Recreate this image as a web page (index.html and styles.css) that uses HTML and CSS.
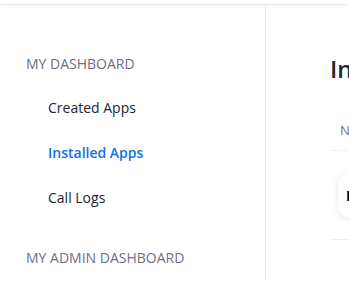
FILE: index.html
```html
<!DOCTYPE html>
<html>
<head>
<meta charset="utf-8">
<link rel="stylesheet" href="styles.css">
</head>
<body>
<div class="header"></div>
<div class="layout">
  <aside class="sidebar">
    <div class="section-title">MY DASHBOARD</div>
    <ul class="nav">
      <li class="nav-item">Created Apps</li>
      <li class="nav-item active">Installed Apps</li>
      <li class="nav-item">Call Logs</li>
    </ul>
    <div class="section-title admin">MY ADMIN DASHBOARD</div>
  </aside>
  <main class="main">
    <h1 class="title">Installed Apps</h1>
    <div class="table">
      <div class="thead">Name</div>
      <div class="row">
        <div class="app-card">N</div>
      </div>
    </div>
  </main>
</div>
</body>
</html>
```
FILE: styles.css
```css
html, body {
  margin: 0;
  padding: 0;
  background: #fff;
  overflow: hidden;
}
body {
  font-family: "Open Sans", "Liberation Sans", sans-serif;
  color: #232333;
  width: 349px;
  height: 281px;
}
.header {
  height: 4px;
  border-bottom: 1px solid #e9e9ec;
  box-shadow: 0 2px 4px rgba(0, 0, 0, 0.03);
  position: relative;
  z-index: 1;
}
.layout {
  display: flex;
  height: 276px;
}
.sidebar {
  width: 265px;
  flex: none;
  border-right: 1px solid #ebebee;
  padding-top: 49px;
  box-sizing: content-box;
}
.section-title {
  font-size: 14px;
  line-height: 20px;
  color: #6e6f82;
  padding-left: 26px;
  margin-bottom: 11px;
}
.section-title.admin {
  margin-top: 28px;
}
.nav {
  list-style: none;
  margin: 0;
  padding: 0;
}
.nav-item {
  height: 45px;
  line-height: 45px;
  font-size: 14px;
  padding-left: 48px;
  color: #232333;
}
.nav-item.active {
  color: #0e72ed;
  font-weight: 600;
}
.main {
  flex: 1;
  padding-left: 64px;
  min-width: 0;
  overflow: hidden;
}
.title {
  margin: 0;
  margin-top: 48px;
  font-size: 24px;
  line-height: 32px;
  font-weight: 600;
  color: #232333;
  white-space: nowrap;
}
.table {
  margin-top: 37px;
}
.thead {
  font-size: 13px;
  line-height: 16px;
  color: #747487;
  padding-left: 10px;
  padding-bottom: 12px;
  border-bottom: 1px solid #ededf4;
  white-space: nowrap;
}
.row {
  height: 88px;
  display: flex;
  align-items: center;
  border-bottom: 1px solid #ededf4;
  padding-left: 8px;
}
.app-card {
  width: 48px;
  height: 46px;
  flex: none;
  border-radius: 12px;
  background: #fff;
  box-shadow: 0 1px 6px rgba(0, 0, 0, 0.1);
  font-size: 14px;
  font-weight: 700;
  color: #000;
  display: flex;
  align-items: center;
  padding-left: 8px;
  box-sizing: border-box;
}
```
